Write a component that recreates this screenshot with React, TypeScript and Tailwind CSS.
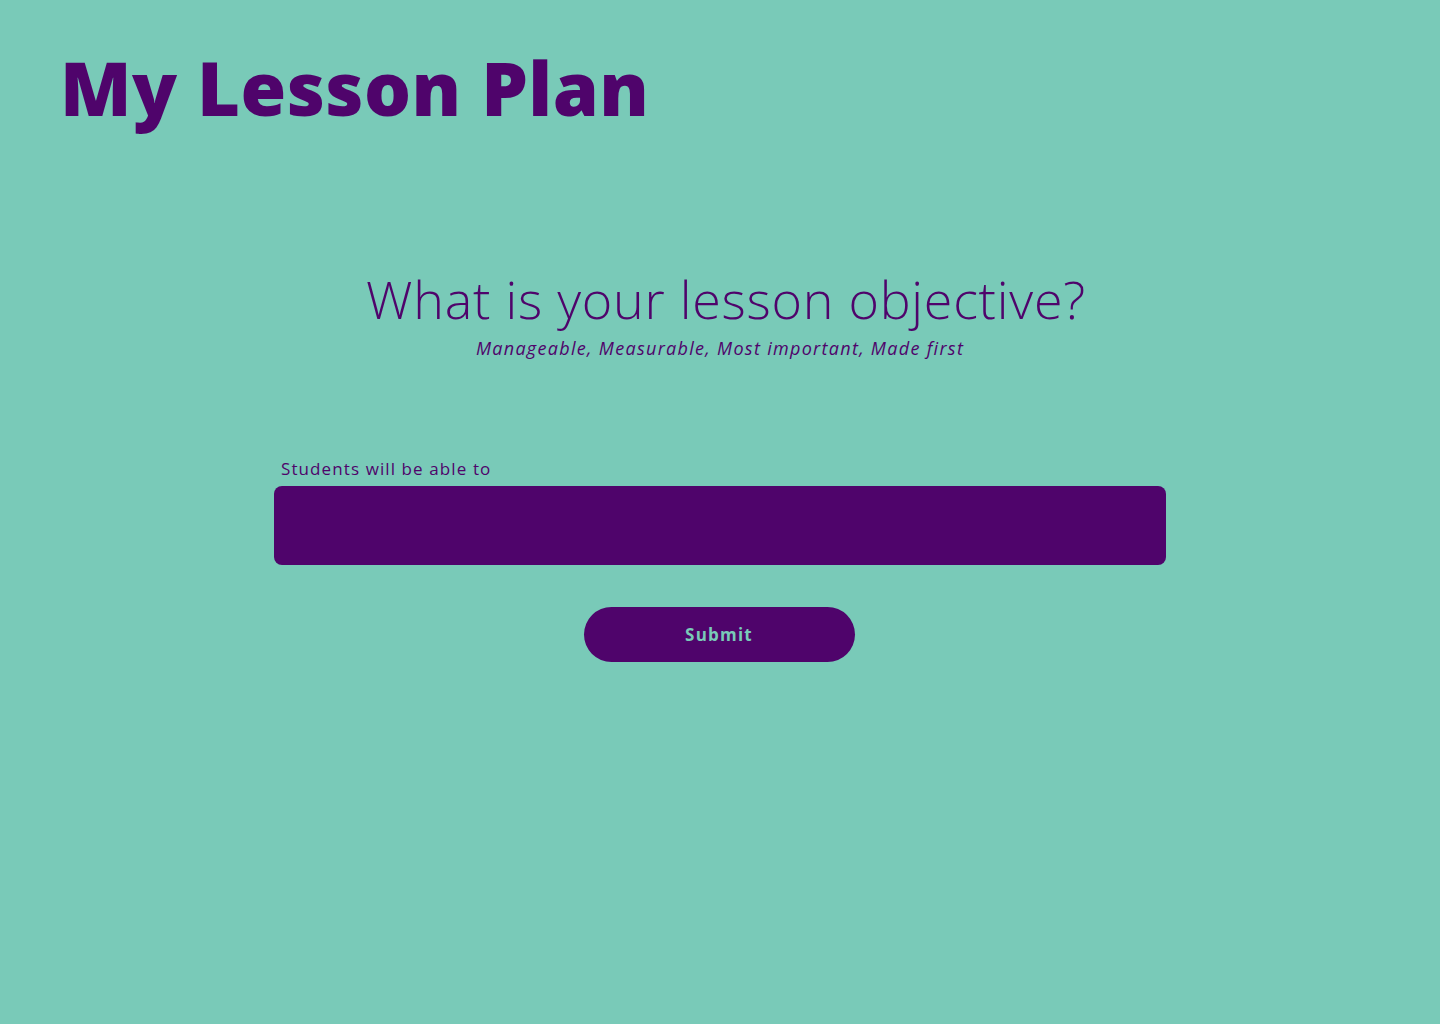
export default function App() {
  return (
    <div
      className="min-h-[1024px] w-full bg-[#79cab8] text-[#4f046b]"
      style={{ fontFamily: '"Open Sans", "Noto Sans", sans-serif' }}
    >
      <header className="px-[60px] pt-[42px]">
        <h1 className="text-[74px] font-extrabold leading-[92px] tracking-[0.4px]">My Lesson Plan</h1>
      </header>
      <main className="mx-auto flex w-[892px] flex-col items-center pt-[133px]">
        <h2 className="pl-[12px] text-[52px] font-light leading-[64px] tracking-[0.75px]">What is your lesson objective?</h2>
        <p className="mt-[5px] text-[18px] italic leading-[24px] tracking-[1.3px]">
          Manageable, Measurable, Most important, Made first
        </p>
        <form className="mt-[97px] flex w-full flex-col items-center" onSubmit={(e) => e.preventDefault()}>
          <label className="self-start pl-[7px] text-[17px] leading-[24px] tracking-[1.1px]">
            Students will be able to
          </label>
          <input
            type="text"
            className="mt-[5px] h-[79px] w-full rounded-[8px] bg-[#4f046b] px-4 text-[18px] text-[#79cab8] outline-none"
          />
          <button
            type="submit"
            className="-ml-[2px] mt-[42px] h-[55px] w-[271px] rounded-full bg-[#4f046b] text-[17px] font-bold tracking-[1.2px] text-[#79cab8]"
          >
            Submit
          </button>
        </form>
      </main>
    </div>
  );
}
